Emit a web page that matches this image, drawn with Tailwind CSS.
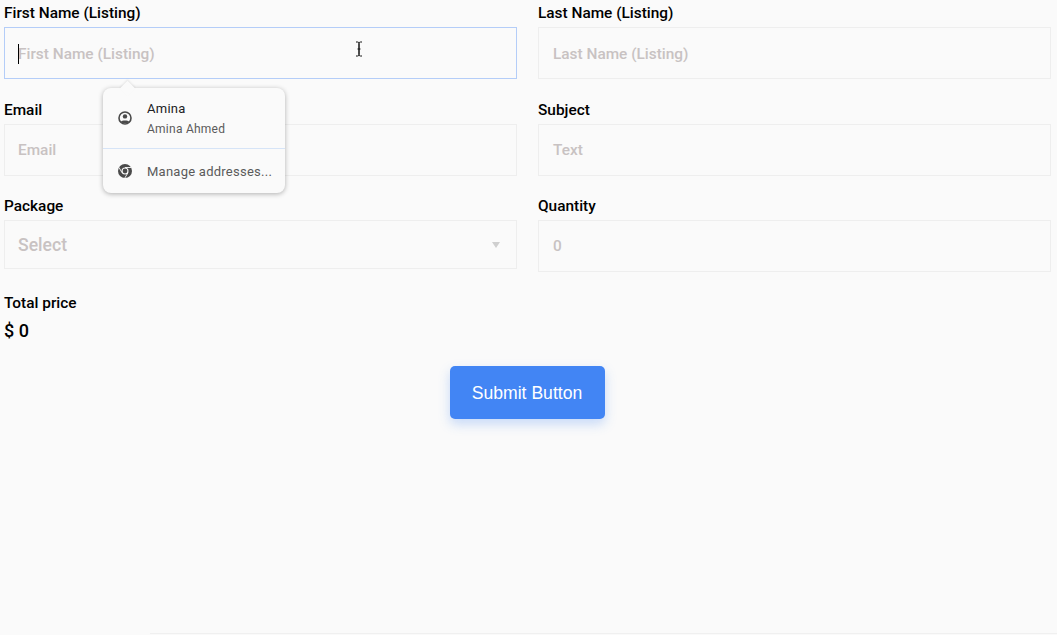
<html>
<head>
    <title>Listing form</title>
    <script src="https://cdn.jsdelivr.net/npm/@tailwindcss/browser@4"></script>
</head>
<body class="bg-[#fafafa] font-['Roboto',sans-serif] overflow-hidden">
    <div class="relative h-[635px] flex flex-col">
        <!-- Form -->
        <div class="grid grid-cols-2 gap-x-[21px] px-[4px] pr-[6px]">
            <div class="h-[96px]">
                <div class="h-[27px] text-[15.4px] leading-[26px] font-medium text-black">First Name (Listing)</div>
                <div class="relative h-[52px] border border-[#b4cdf8] flex items-center pl-[13px] pt-[3px] text-[15.4px] font-medium text-[#c8c2c2]">
                    <span class="absolute left-[13px] top-[16px] w-px h-[20px] bg-black"></span>
                    First Name (Listing)
                    <!-- I-beam cursor -->
                    <svg class="absolute left-[349px] top-[13px]" width="10" height="16" viewBox="0 0 10 16" fill="none" stroke="#111" stroke-width="1">
                        <path d="M2 1h1.500q1.500 0 1.500 1.500v11q0 1.500-1.500 1.500H2M8 1H6.500q-1.500 0-1.500 1.500v11q0 1.500 1.500 1.500H8M3.500 8h3"/>
                    </svg>
                </div>
            </div>
            <div class="h-[96px]">
                <div class="h-[27px] text-[15.4px] leading-[26px] font-medium text-black">Last Name (Listing)</div>
                <div class="h-[52px] border border-[#eeeeee] flex items-center pl-[14px] pt-[3px] text-[15.4px] font-medium text-[#c8c2c2]">Last Name (Listing)</div>
            </div>
            <div class="h-[96px]">
                <div class="h-[28px] text-[15.4px] leading-[28px] font-medium text-black">Email</div>
                <div class="h-[52px] border border-[#eeeeee] flex items-center pl-[13px] pt-[2px] text-[15.4px] font-medium text-[#c8c2c2]">Email</div>
            </div>
            <div class="h-[96px]">
                <div class="h-[28px] text-[15.4px] leading-[28px] font-medium text-black">Subject</div>
                <div class="h-[52px] border border-[#eeeeee] flex items-center pl-[14px] pt-[2px] text-[15.4px] font-medium text-[#c8c2c2]">Text</div>
            </div>
            <div class="h-[84px]">
                <div class="h-[28px] text-[15.4px] leading-[29px] font-medium text-black">Package</div>
                <div class="h-[49px] border border-[#eeeeee] flex items-center justify-between pl-[13px] pr-[16px] text-[17.6px] font-medium text-[#c8c2c2]">
                    <span class="pt-[2px]">Select</span>
                    <span class="w-0 h-0 border-x-[4px] border-x-transparent border-t-[6px] border-t-[#cfcfcf]"></span>
                </div>
            </div>
            <div class="h-[84px]">
                <div class="h-[28px] text-[15.4px] leading-[29px] font-medium text-black">Quantity</div>
                <div class="h-[52px] border border-[#eeeeee] flex items-center pl-[14px] pt-[2px] text-[15.4px] font-medium text-[#c8c2c2]">0</div>
            </div>
        </div>

        <!-- Total -->
        <div class="px-[4px] mt-[13px]">
            <div class="text-[15.4px] leading-[28px] font-medium text-black">Total price</div>
            <div class="text-[18px] leading-[28px] font-medium text-black">$ 0</div>
        </div>

        <!-- Submit -->
        <div class="flex justify-center mt-[21px] pr-[3px]">
            <button class="w-[155px] h-[53px] pt-[2px] rounded-[5px] bg-[#4285f4] text-white text-[17.6px] font-['Liberation_Sans',sans-serif] shadow-[0_5px_12px_rgba(66,133,244,0.28)]">Submit Button</button>
        </div>

        <div class="mt-auto ml-[150px] mb-px border-b border-[#f0f0f0]"></div>

        <!-- Autofill popup -->
        <div class="absolute left-[103px] top-[88px] w-[182px] h-[105px] rounded-[8px] bg-[#fafafa] shadow-[0_1px_5px_rgba(0,0,0,0.3)]">
            <span class="absolute left-[19px] top-[-5px] w-[11px] h-[11px] rotate-45 bg-[#fafafa] shadow-[-1px_-1px_2px_rgba(0,0,0,0.08)]"></span>
            <div class="relative h-[61px] border-b border-[#d6e4f7] flex items-center pl-[15px]">
                <svg width="14" height="14" viewBox="0 0 14 14">
                    <circle cx="7" cy="7" r="6" fill="none" stroke="#4a4a4a" stroke-width="1.600"/>
                    <circle cx="7" cy="5.400" r="2.200" fill="#4a4a4a"/>
                    <path d="M2.800 10.800C4 8.900 10 8.900 11.200 10.800C10 12.800 4 12.800 2.800 10.800Z" fill="#4a4a4a"/>
                </svg>
                <div class="ml-[15px] pt-[1px]">
                    <div class="text-[13px] leading-[18px] tracking-[0.25px] text-[#202124]">Amina</div>
                    <div class="text-[12px] leading-[18px] mt-[2px] tracking-[0.25px] text-[#5a5a5a]">Amina Ahmed</div>
                </div>
            </div>
            <div class="relative h-[44px] flex items-center pl-[15px]">
                <svg width="14" height="14" viewBox="0 0 14 14">
                    <circle cx="7" cy="7" r="7" fill="#4a4a4a"/>
                    <circle cx="7" cy="7" r="3.500" fill="#fafafa"/>
                    <circle cx="7" cy="7" r="2.400" fill="#4a4a4a"/>
                    <path d="M7 3.500H13.300M4 8.700L0.900 3.300M10 8.700L6.800 14" stroke="#fafafa" stroke-width="0.900"/>
                </svg>
                <div class="ml-[15px] pt-[2px] text-[13px] tracking-[0.25px] text-[#5a5a5a]">Manage addresses...</div>
            </div>
        </div>
    </div>
</body>
</html>
